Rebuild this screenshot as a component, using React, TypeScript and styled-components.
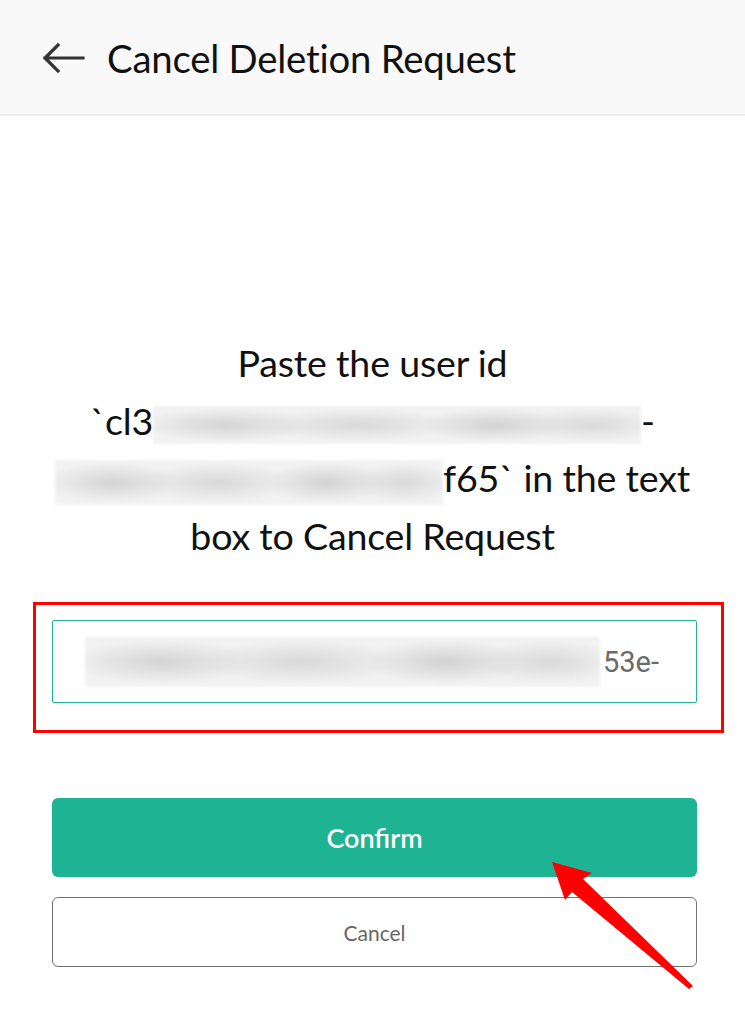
import styled, { createGlobalStyle } from 'styled-components';

const GlobalStyle = createGlobalStyle`
  body {
    margin: 0;
    background: #ffffff;
    font-family: Lato, "Noto Sans", sans-serif;
  }
`;

const Page = styled.div`
  position: relative;
  width: 745px;
  min-height: 1024px;
  background-color: #ffffff;
  overflow: hidden;
`;

const Header = styled.header`
  box-sizing: border-box;
  height: 116px;
  display: flex;
  align-items: center;
  gap: 21px;
  padding: 2px 0 0 42px;
  background-color: #f9f9f9;
  border-bottom: 2px solid #ebebeb;
`;

const BackButton = styled.button`
  display: flex;
  padding: 0;
  border: none;
  background: none;
  cursor: pointer;
`;

const Title = styled.h1`
  margin: 0;
  font-size: 38.3px;
  font-weight: 400;
  letter-spacing: -0.2px;
  color: #111111;
`;

const Prompt = styled.div`
  margin-top: 218px;
  font-size: 37.6px;
  letter-spacing: -0.2px;
  color: #111111;
  text-align: center;
`;

const PromptLine = styled.div`
  height: 57.5px;
  line-height: 57.5px;
  white-space: nowrap;
`;

const Redacted = styled.span<{ $w: number; $h: number }>`
  display: inline-block;
  vertical-align: middle;
  width: ${(p) => p.$w}px;
  height: ${(p) => p.$h}px;
  background:
    radial-gradient(ellipse 18% 45% at 15% 50%, #d4d4d4, transparent),
    radial-gradient(ellipse 20% 45% at 42% 50%, #d8d8d8, transparent),
    radial-gradient(ellipse 16% 45% at 70% 50%, #d2d2d2, transparent),
    radial-gradient(ellipse 14% 45% at 90% 50%, #d9d9d9, transparent),
    #f2f2f2;
  filter: blur(1.5px);
`;

const Highlight = styled.div`
  margin: 38px 21px 0 33px;
  padding: 15px 24px 27px 16px;
  border: 3px solid #ff0000;
`;

const IdField = styled.div`
  box-sizing: border-box;
  height: 83px;
  display: flex;
  align-items: center;
  gap: 3px;
  padding-left: 32px;
  border: 1.5px solid #20b394;
  border-radius: 2px;
  font-family: Roboto, "Liberation Sans", sans-serif;
  font-size: 29px;
  color: #6b6b6b;
  overflow: hidden;
  white-space: nowrap;
`;

const Actions = styled.div`
  display: flex;
  flex-direction: column;
  gap: 20px;
  margin: 65px 48px 0 52px;
`;

const Button = styled.button<{ $primary?: boolean }>`
  box-sizing: border-box;
  width: 100%;
  height: ${(p) => (p.$primary ? 79 : 70)}px;
  border-radius: 6px;
  border: ${(p) => (p.$primary ? 'none' : '1.5px solid #707070')};
  background-color: ${(p) => (p.$primary ? '#1eb392' : '#ffffff')};
  color: ${(p) => (p.$primary ? '#ffffff' : '#666666')};
  font-family: Lato, "Noto Sans", sans-serif;
  font-size: ${(p) => (p.$primary ? 27 : 21)}px;
  font-weight: ${(p) => (p.$primary ? 600 : 400)};
  cursor: pointer;
`;

const Pointer = styled.svg`
  position: absolute;
  left: 0;
  top: 0;
  pointer-events: none;
`;

function App() {
  return (
    <Page>
      <GlobalStyle />
      <Header>
        <BackButton aria-label="Back">
          <svg width="44" height="32" viewBox="0 0 44 32">
            <path d="M3 16 H41 M16 3 L3 16 L16 29" fill="none" stroke="#333333" strokeWidth="3.2" strokeLinecap="square" />
          </svg>
        </BackButton>
        <Title>Cancel Deletion Request</Title>
      </Header>

      <Prompt>
        <PromptLine>Paste the user id</PromptLine>
        <PromptLine>
          `cl3<Redacted $w={488} $h={38} />-
        </PromptLine>
        <PromptLine>
          <Redacted $w={388} $h={45} />f65` in the text
        </PromptLine>
        <PromptLine>box to Cancel Request</PromptLine>
      </Prompt>

      <Highlight>
        <IdField>
          <Redacted $w={515} $h={50} />53e-
        </IdField>
      </Highlight>

      <Actions>
        <Button $primary>Confirm</Button>
        <Button>Cancel</Button>
      </Actions>

      <Pointer width="745" height="1024" viewBox="0 0 745 1024">
        <polygon points="552,862 592,873 583,879 693,986 689,989 572,892 565,900" fill="#ff0000" />
      </Pointer>
    </Page>
  );
}

export default App;
